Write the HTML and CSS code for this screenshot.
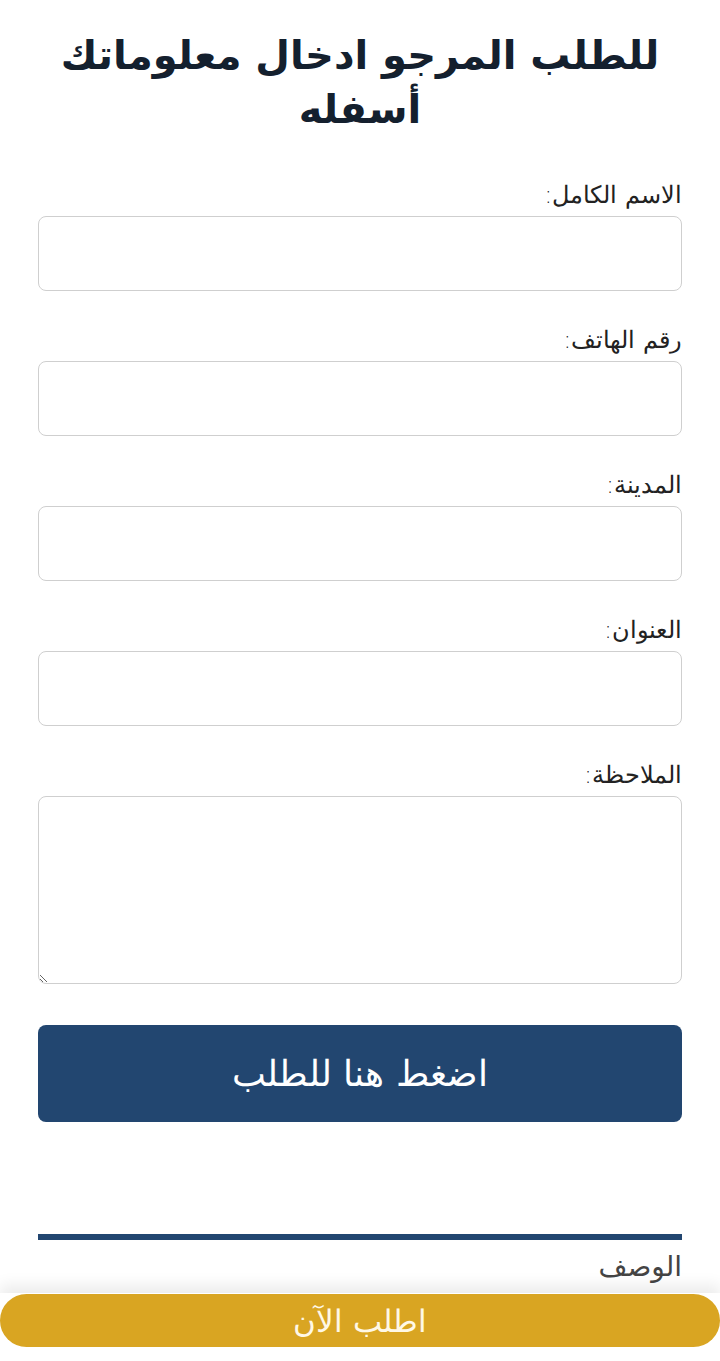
FILE: index.html
```html
<!doctype html>
<html lang="ar" dir="rtl">
  <head>
    <meta charset="UTF-8" />
    <meta name="viewport" content="width=device-width, initial-scale=1.0" />
    <title>طلب</title>
    <link rel="stylesheet" href="styles.css">
  </head>

  <body>
    <div class="page">
      <h1 class="title">للطلب المرجو ادخال معلوماتك أسفله</h1>

      <form class="order-form">
        <div class="field">
          <label class="field-label">الاسم الكامل:</label>
          <input type="text" class="field-input" />
        </div>
        <div class="field">
          <label class="field-label">رقم الهاتف:</label>
          <input type="text" class="field-input" />
        </div>
        <div class="field">
          <label class="field-label">المدينة:</label>
          <input type="text" class="field-input" />
        </div>
        <div class="field">
          <label class="field-label">العنوان:</label>
          <input type="text" class="field-input" />
        </div>
        <div class="field">
          <label class="field-label">الملاحظة:</label>
          <textarea class="field-input field-textarea"></textarea>
        </div>

        <button type="button" class="btn-submit">اضغط هنا للطلب</button>
      </form>

      <div class="desc">
        <div class="desc-bar"></div>
        <h2 class="desc-title">الوصف</h2>
      </div>
    </div>

    <div class="sticky-order">
      <button type="button" class="btn-order">اطلب الآن</button>
    </div>
  </body>
</html>
```

FILE: styles.css
```css
body {
  margin: 0;
  font-family: 'DejaVu Sans', 'Noto Sans', sans-serif;
  background: #fff;
  color: #1a1a1a;
}

.page {
  padding: 28px 38px 120px;
}

.title {
  margin: 0 0 41px;
  text-align: center;
  font-size: 40px;
  line-height: 54px;
  font-weight: 700;
  color: #14202e;
}

.order-form {
  display: flex;
  flex-direction: column;
}

.field {
  display: flex;
  flex-direction: column;
  margin-bottom: 31px;
}

.field-label {
  font-size: 24px;
  line-height: 30px;
  font-weight: 300;
  color: #222;
  margin: 3px 0 6px;
}

.field-input {
  box-sizing: border-box;
  width: 100%;
  height: 75px;
  border: 1px solid #cfcfcf;
  border-radius: 8px;
  background: #fff;
  font-family: inherit;
  font-size: 18px;
  padding: 0 12px;
}

.field-textarea {
  height: 188px;
  resize: vertical;
  padding: 12px;
}

.btn-submit {
  margin-top: 10px;
  height: 97px;
  border: none;
  border-radius: 8px;
  background: #224670;
  color: #fff;
  font-family: inherit;
  font-size: 36px;
  font-weight: 300;
  cursor: pointer;
}

.desc {
  margin-top: 112px;
}

.desc-bar {
  height: 6px;
  background: #224670;
}

.desc-title {
  margin: 10px 0 0;
  font-size: 28px;
  font-weight: 400;
  color: #444;
}

.sticky-order {
  position: fixed;
  left: 0;
  right: 0;
  bottom: 0;
  padding: 1px 0 14px;
  background: #fff;
  box-shadow: 0 -8px 14px rgba(0, 0, 0, 0.08);
}

.btn-order {
  display: block;
  width: 100%;
  height: 53px;
  border: none;
  border-radius: 27px;
  background: #d9a522;
  color: #fff8e6;
  font-family: inherit;
  font-size: 31px;
  font-weight: 300;
  cursor: pointer;
}
```
